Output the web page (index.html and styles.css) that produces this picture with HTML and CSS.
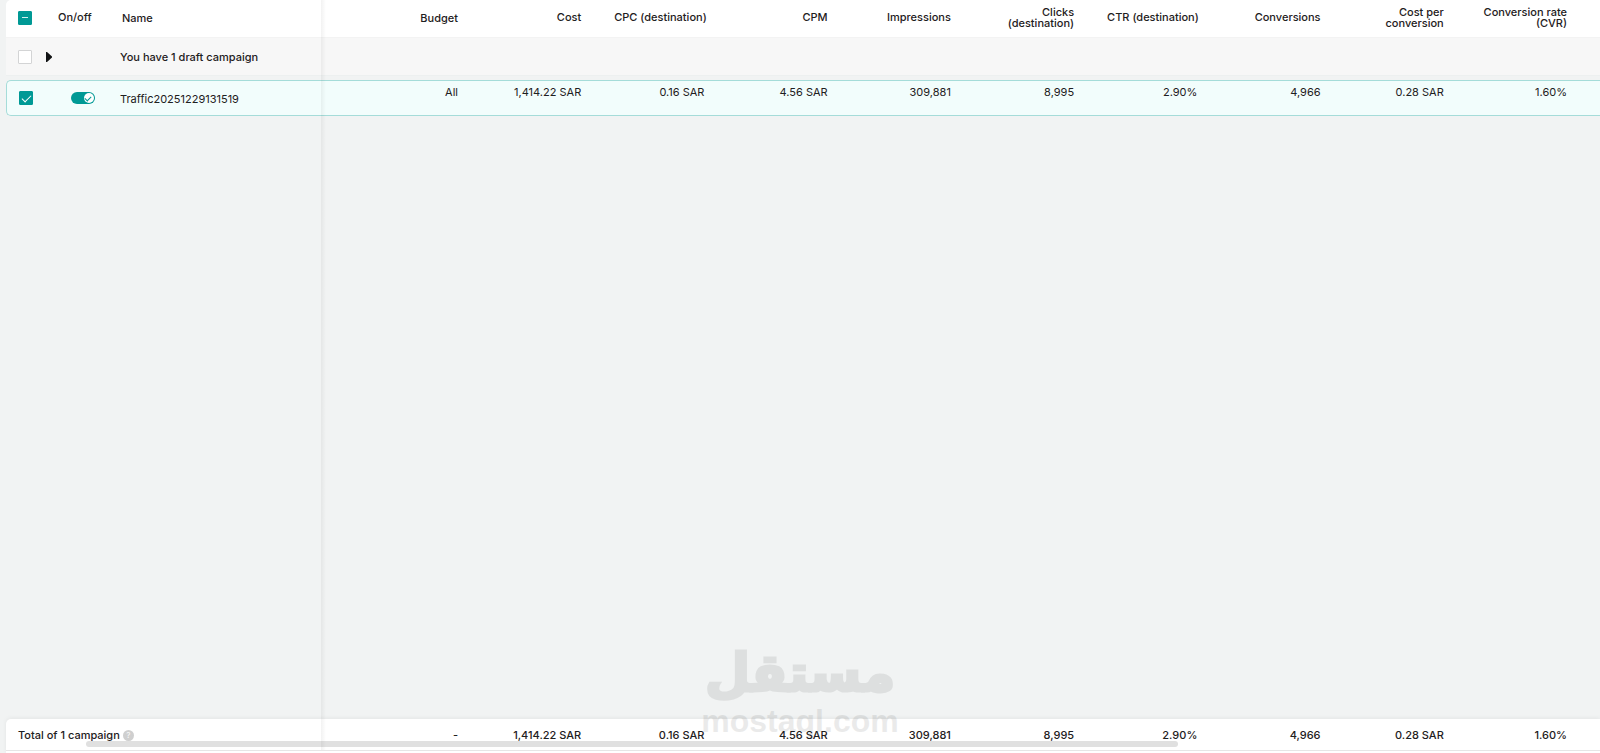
FILE: index.html
```
<!DOCTYPE html>
<html lang="en">
<head>
    <meta charset="UTF-8">
    <meta name="viewport" content="width=device-width, initial-scale=1.0">
    <title>Campaigns</title>
    <link rel="stylesheet" href="styles.css">
</head>
<body>
<main class="campaigns">
    <table class="grid">
        <colgroup>
            <col class="col-check">
            <col class="col-switch">
            <col class="col-name">
            <col class="col-budget">
            <col span="9">
        </colgroup>
        <thead>
            <tr class="head-row">
                <th class="left"><input type="checkbox" class="check partial" aria-label="Select all"></th>
                <th class="left">On/off</th>
                <th class="left fixed">Name</th>
                <th class="fixed">Budget</th>
                <th>Cost</th>
                <th>CPC (destination)</th>
                <th>CPM</th>
                <th>Impressions</th>
                <th>Clicks<br>(destination)</th>
                <th>CTR (destination)</th>
                <th>Conversions</th>
                <th>Cost per<br>conversion</th>
                <th>Conversion rate<br>(CVR)</th>
            </tr>
        </thead>
        <tbody>
            <tr class="draft-row">
                <td class="left"><input type="checkbox" class="check" aria-label="Select drafts"></td>
                <td class="left expand-cell">
                    <button type="button" class="expand" aria-label="Expand drafts">
                        <svg width="6" height="10" viewBox="0 0 6 10"><path d="M0 0H1L6 4.4V5.6L1 10H0Z" fill="#121415"/></svg>
                    </button>
                </td>
                <td class="left" colspan="11">You have 1 draft campaign</td>
            </tr>
            <tr class="campaign-row">
                <td class="left"><input type="checkbox" class="check" aria-label="Select Traffic20251229131519" checked></td>
                <td class="left switch-cell"><input type="checkbox" role="switch" class="switch" aria-label="On/off" checked></td>
                <td class="left title">Traffic20251229131519</td>
                <td>All</td>
                <td>1,414.22 SAR</td>
                <td>0.16 SAR</td>
                <td>4.56 SAR</td>
                <td>309,881</td>
                <td>8,995</td>
                <td>2.90%</td>
                <td>4,966</td>
                <td>0.28 SAR</td>
                <td>1.60%</td>
            </tr>
        </tbody>
    </table>

    <div class="total">
        <table class="grid">
            <colgroup>
                <col class="col-check">
                <col class="col-switch">
                <col class="col-name">
                <col class="col-budget">
                <col span="9">
            </colgroup>
            <tbody>
                <tr class="total-row">
                    <td class="left" colspan="3">
                        <span class="total-label">Total of 1 campaign
                            <button type="button" class="help" aria-label="Help">?</button>
                        </span>
                    </td>
                    <td>-</td>
                    <td>1,414.22 SAR</td>
                    <td>0.16 SAR</td>
                    <td>4.56 SAR</td>
                    <td>309,881</td>
                    <td>8,995</td>
                    <td>2.90%</td>
                    <td>4,966</td>
                    <td>0.28 SAR</td>
                    <td>1.60%</td>
                </tr>
            </tbody>
        </table>
        <div class="scrollbar"></div>
    </div>

    <div class="frozen-edge"></div>

    <div class="watermark">
        <span class="watermark-ar" lang="ar" dir="rtl">مستقل</span>
        <span class="watermark-en">mostaql.com</span>
    </div>
</main>
</body>
</html>
```
FILE: styles.css
```
* {
    box-sizing: border-box;
}

body {
    margin: 0;
    background-color: #f1f3f3;
    color: #1e2021;
    font-family: Inter, "Liberation Sans", sans-serif;
    font-size: 11px;
    line-height: 11px;
}

.campaigns {
    position: relative;
    display: flex;
    flex-direction: column;
    justify-content: space-between;
    min-height: 100vh;
    padding-left: 6px;
    overflow: hidden;
}

.grid {
    width: 100%;
    table-layout: fixed;
    border-collapse: separate;
    border-spacing: 0;
}

.col-check {
    width: 40px;
}

.col-switch {
    width: 64px;
}

.col-name {
    width: 213px;
}

.col-budget {
    width: 168px;
}

th,
td {
    padding: 0 33px 0 0;
    text-align: right;
    vertical-align: middle;
    font-weight: 500;
    white-space: nowrap;
}

th.left,
td.left {
    padding: 0 0 0 12px;
    text-align: left;
}

td.left + td.left + td.left {
    padding-left: 10px;
}

/* header */
.head-row th {
    height: 38px;
    padding-bottom: 2px;
    background-color: #fff;
    border-bottom: 1px solid #f3f3f3;
}

.head-row th.fixed {
    padding-bottom: 0;
}

.head-row th:first-child {
    border-top-left-radius: 5px;
}

/* drafts */
.draft-row td {
    height: 42px;
    background-color: #f7f7f7;
    background-clip: padding-box;
    border-bottom: 4px solid transparent;
    box-shadow: inset 0 -1px #edf0f0;
}

.draft-row td.expand-cell {
    padding-left: 0;
}

.expand {
    display: block;
    padding: 0;
    border: none;
    background: none;
    cursor: pointer;
}

.expand svg {
    display: block;
}

/* selected campaign */
.campaign-row td {
    height: 36px;
    padding-bottom: 12px;
    background-color: #f2fdfc;
    border-top: 1px solid #a5dcd9;
    border-bottom: 1px solid #a5dcd9;
    font-weight: 400;
}

.campaign-row td.left {
    padding-bottom: 0;
}

.campaign-row td.title {
    padding-top: 2px;
}

.campaign-row td:first-child {
    border-left: 1px solid #a5dcd9;
    border-radius: 5px 0 0 5px;
}

.campaign-row td.switch-cell {
    padding-left: 25px;
}

/* controls */
.check {
    display: block;
    position: relative;
    width: 14px;
    height: 14px;
    margin: 0;
    appearance: none;
    background-color: #fff;
    border: 1px solid #d3d4d5;
    border-radius: 1px;
}

.check:checked,
.check.partial {
    background-color: #009995;
    border-color: #009995;
}

.check.partial::after {
    content: "";
    position: absolute;
    top: 5px;
    left: 3px;
    width: 6px;
    height: 1px;
    background-color: #d5f0ef;
}

.check:checked::after {
    content: "";
    position: absolute;
    top: 3px;
    left: 2px;
    width: 8px;
    height: 4px;
    border: solid #fff;
    border-width: 0 0 1px 1px;
    transform: rotate(-45deg);
}

.switch {
    display: block;
    position: relative;
    width: 24px;
    height: 12px;
    margin: 0;
    appearance: none;
    background-color: #009995;
    border-radius: 6px;
}

.switch::before {
    content: "";
    position: absolute;
    top: 1px;
    right: 1px;
    width: 10px;
    height: 10px;
    background-color: #fff;
    border-radius: 50%;
}

.switch::after {
    content: "";
    position: absolute;
    top: 4px;
    right: 4px;
    width: 5px;
    height: 3px;
    border: solid #009995;
    border-width: 0 0 1px 1px;
    transform: rotate(-45deg);
}

/* totals */
.total {
    position: relative;
    padding-bottom: 2px;
    background-color: #fff;
    border-top-left-radius: 5px;
    box-shadow: 0 -1px 4px rgba(0, 0, 0, 0.06);
}

.total-row td,
.total-row td.left {
    height: 32px;
    padding-top: 1px;
    border-bottom: 1px solid #e6e6e6;
}

.total-label {
    display: flex;
    align-items: center;
    gap: 3px;
}

.help {
    width: 11px;
    height: 11px;
    padding: 0;
    border: none;
    border-radius: 50%;
    background-color: #cfcfcf;
    color: #f4f4f4;
    font: 500 8px/11px Inter, sans-serif;
    text-align: center;
}

.scrollbar {
    position: absolute;
    bottom: 6px;
    left: 5%;
    width: 68.5%;
    height: 6px;
    border-radius: 3px;
    background-color: #e0e0e0;
}

/* shadow at the right side of the fixed columns */
.frozen-edge {
    position: absolute;
    top: 0;
    bottom: 3px;
    left: 321px;
    width: 5px;
    background: linear-gradient(to right, rgba(0, 0, 0, 0.05), rgba(0, 0, 0, 0));
}

.watermark {
    position: absolute;
    right: 0;
    bottom: 16px;
    left: 0;
    display: flex;
    flex-direction: column;
    align-items: center;
    color: #000;
    opacity: 0.08;
    pointer-events: none;
}

.watermark-ar {
    font: 700 52px/64px "DejaVu Sans", sans-serif;
    -webkit-text-stroke: 3px #000;
    stroke-linejoin: round;
}

.watermark-en {
    font: 700 32px/32px "Liberation Sans", sans-serif;
}
```
